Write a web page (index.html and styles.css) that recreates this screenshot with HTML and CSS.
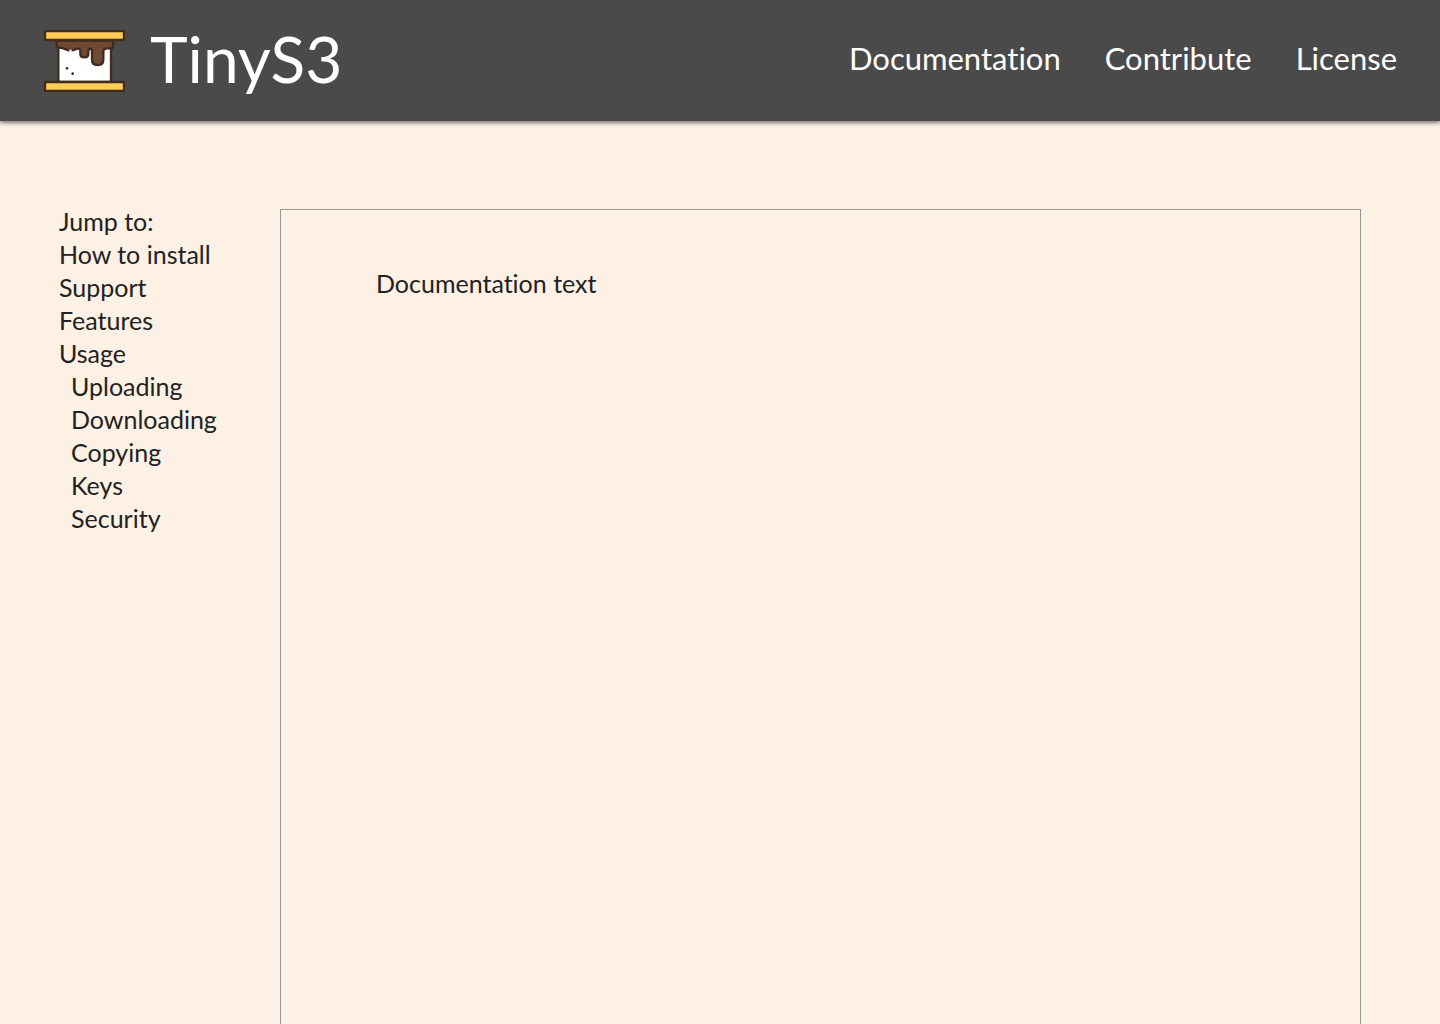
FILE: index.html
```html
<!DOCTYPE html>
<html lang="en">
<head>
  <meta charset="utf-8">
  <meta name="viewport" content="width=device-width, initial-scale=1">
  <title>TinyS3 Documentation</title>
  <link rel="stylesheet" href="styles.css">
</head>
<body>
  <header class="site-header">
    <a class="brand" href="#">
      <svg class="brand-logo" viewBox="24 30 243 186" aria-hidden="true">
        <path class="marshmallow" d="M67 62H225V186H67Z"/>
        <path class="chocolate" d="M62 62H231V82Q231 85 227 85H213Q203 85 202 93V119Q202 135 185 135Q168 135 168 119V96Q168 86 161 86Q157 87 157 96V101Q157 112 145 112Q133 112 133 101V92Q132 85 124 86L108 91L98 91L82 85L62 81Z"/>
        <path class="marshmallow-top" d="M100 89H107V95H100Z"/>
        <rect class="cracker" x="27" y="33" width="237" height="27" rx="2"/>
        <rect class="cracker" x="27" y="186" width="237" height="27" rx="2"/>
        <circle class="crumb" cx="93" cy="145" r="4"/>
        <circle class="crumb" cx="110" cy="161" r="4"/>
      </svg>
      <span class="brand-name">TinyS3</span>
    </a>
    <nav class="site-nav" aria-label="Main">
      <a href="#documentation">Documentation</a>
      <a href="#contribute">Contribute</a>
      <a href="#license">License</a>
    </nav>
  </header>
  <div class="page">
    <nav class="toc" aria-label="Jump to">
      <p class="toc-title">Jump to:</p>
      <ul class="toc-list">
        <li><a href="#install">How to install</a></li>
        <li><a href="#support">Support</a></li>
        <li><a href="#features">Features</a></li>
        <li><a href="#usage">Usage</a>
          <ul class="toc-sublist">
            <li><a href="#uploading">Uploading</a></li>
            <li><a href="#downloading">Downloading</a></li>
            <li><a href="#copying">Copying</a></li>
            <li><a href="#keys">Keys</a></li>
            <li><a href="#security">Security</a></li>
          </ul>
        </li>
      </ul>
    </nav>
    <main class="content" id="documentation">
      <p>Documentation text</p>
    </main>
  </div>
</body>
</html>
```
FILE: styles.css
```css
* {
  box-sizing: border-box;
}

body {
  margin: 0;
  min-height: 100vh;
  display: flex;
  flex-direction: column;
  background: #fdf0e4;
  color: #222;
  font-family: Avenir, Lato, sans-serif;
  font-size: 25px;
  font-weight: 400;
  font-variant-ligatures: none;
  line-height: 33px;
}

a {
  color: inherit;
  text-decoration: none;
}

p,
ul {
  margin: 0;
  padding: 0;
}

ul {
  list-style: none;
}

.site-header {
  display: flex;
  align-items: center;
  justify-content: space-between;
  padding: 17px 43px 16px 44px;
  background: #4a4a4a;
  color: #fff;
  box-shadow: 0 2px 4px rgba(0, 0, 0, 0.5);
}

.brand {
  display: flex;
  align-items: center;
  gap: 25px;
}

.brand-logo {
  width: 81px;
  height: 62px;
}

.brand-name {
  padding-bottom: 4px;
  font-size: 64px;
  line-height: 84px;
}

.marshmallow,
.chocolate,
.cracker {
  stroke: #412a20;
  stroke-width: 7;
  stroke-linejoin: round;
}

.marshmallow,
.marshmallow-top {
  fill: #fff;
}

.chocolate {
  fill: #6e4933;
}

.cracker {
  fill: #ffcb57;
}

.crumb {
  fill: #412a20;
}

.site-nav {
  display: flex;
  gap: 44px;
  padding-bottom: 6px;
  font-size: 31px;
}

.page {
  flex: 1;
  display: flex;
  padding: 84px 79px 0 59px;
}

.toc {
  flex: 0 0 221px;
}

.toc-sublist {
  padding-left: 12px;
}

.content {
  flex: 1;
  margin-top: 4px;
  padding: 57px 95px;
  border: 1px solid #979797;
  border-bottom: 0;
}
```
